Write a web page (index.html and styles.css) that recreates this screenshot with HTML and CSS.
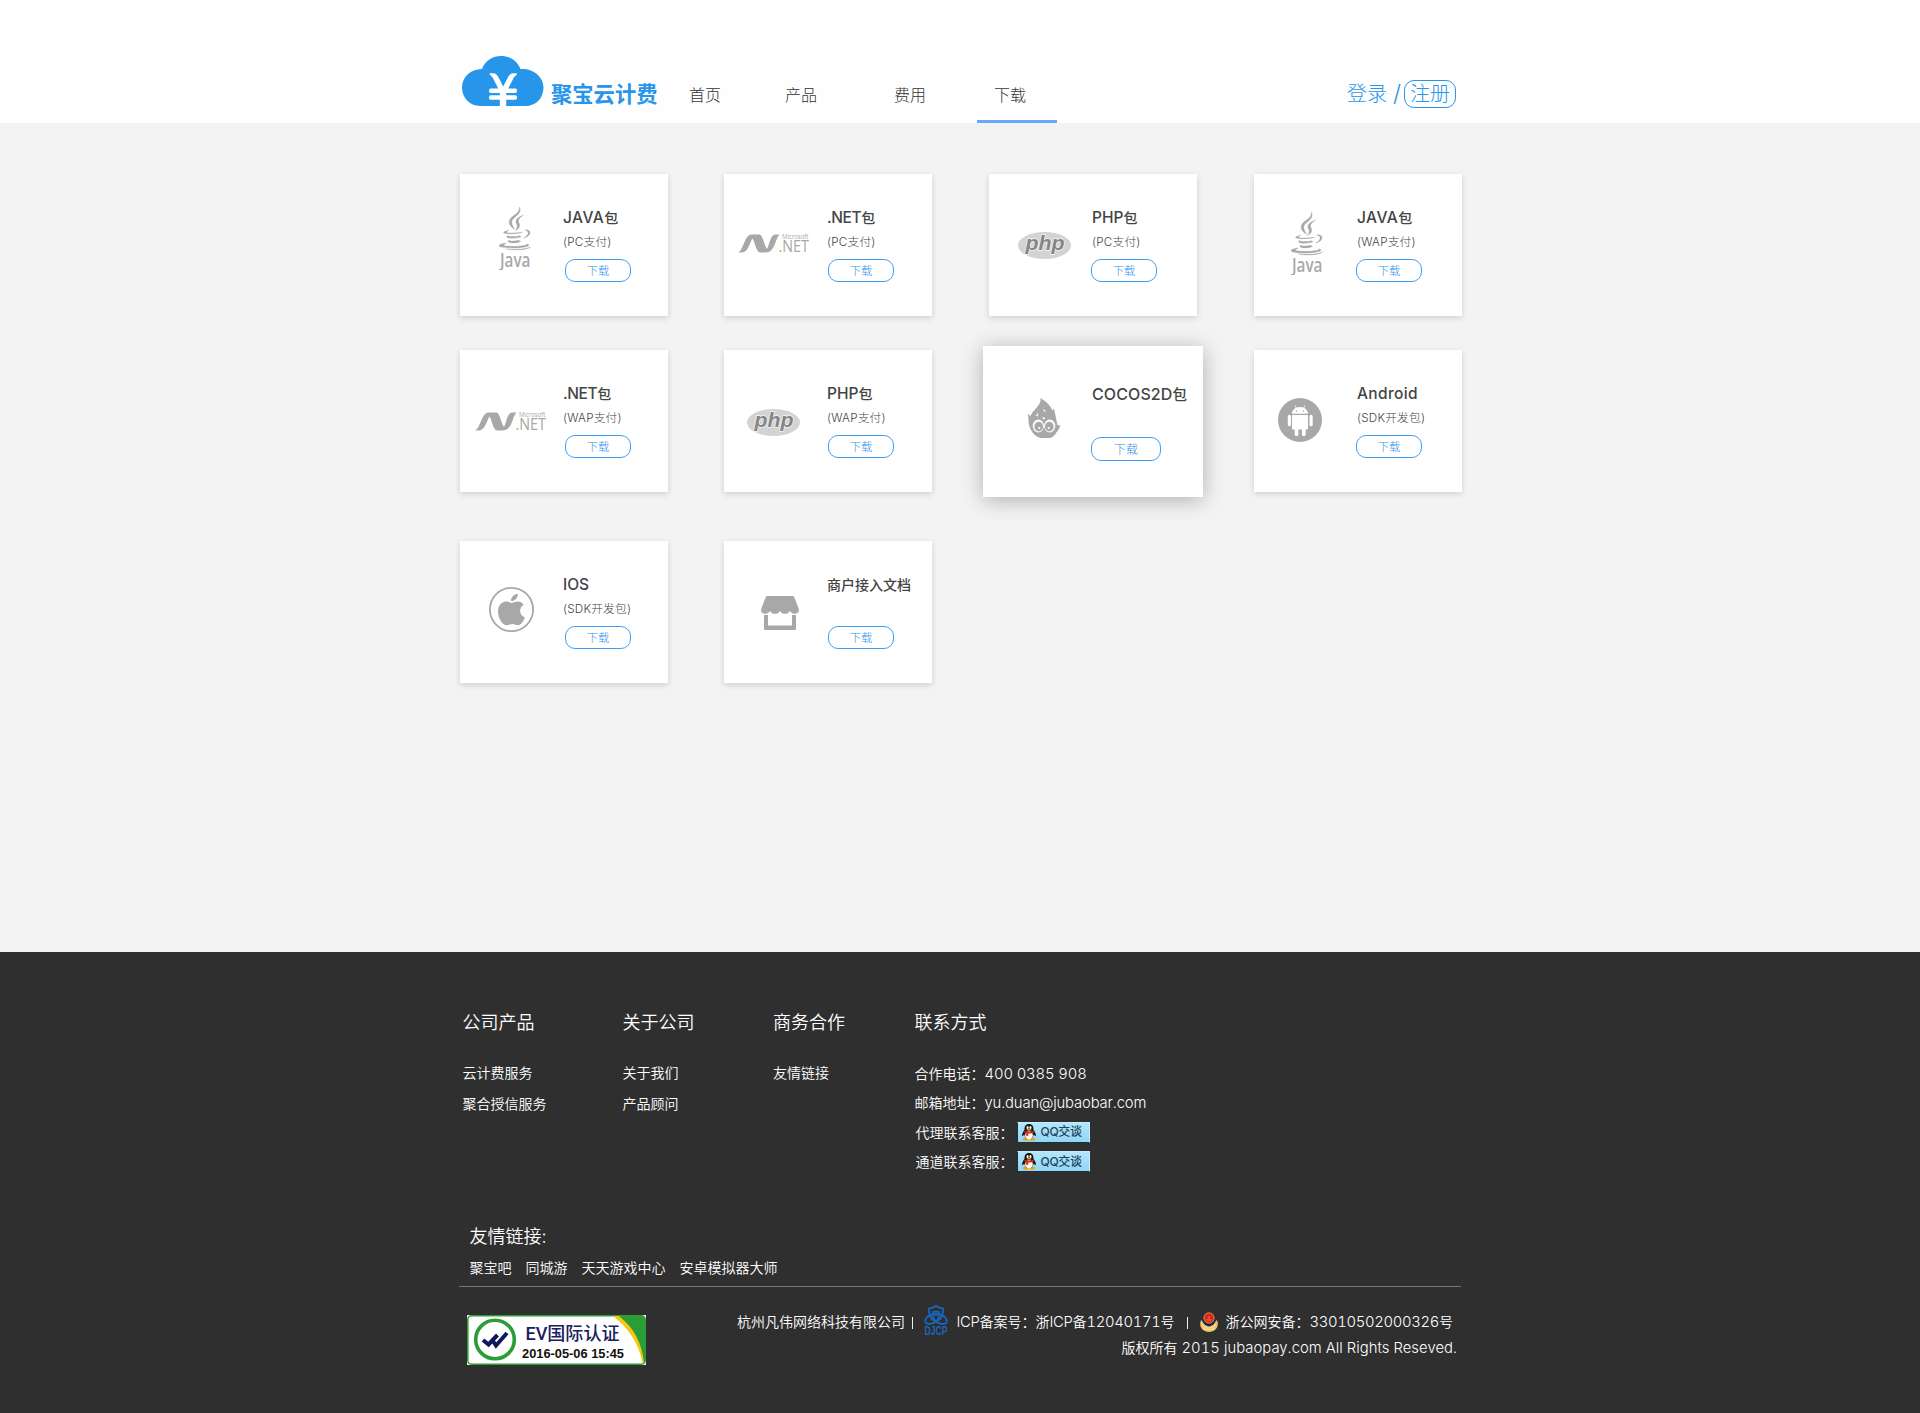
FILE: index.html
```html
<!DOCTYPE html>
<html lang="zh-CN">
<head>
<meta charset="utf-8">
<title>聚宝云计费 - 下载</title>
<link rel="stylesheet" href="styles.css">
</head>
<body>
<svg class="defs" width="0" height="0" aria-hidden="true">
  <symbol id="java" viewBox="0 0 32 63">
    <g fill="#a8a8a8" stroke="#a8a8a8" stroke-width=".35">
      <path d="M20.500 0c2.400 5-2.300 8.300-5.600 11.300-3.200 3-2.500 5.500.8 11.200C10.500 18.800 9 15.800 11 12.200 13.300 8.300 21 6.500 20.500 0z"/>
      <path d="M24.500 8.200c-5.800 2-8.700 4.500-7.200 8 1.300 2.700 1.300 4.200-.8 7.300 4-2.400 5-4.500 3.500-7.600-1.400-2.900-.1-4.600 4.500-7.700z"/>
      <path d="M10 23.400c-3 .3-6.200 1.400-5.300 2.300 1.800 1.600 14.500 1.300 19-.5-4 .5-14.200 1.200-16 .2-.7-.5.500-1.400 2.300-2z"/>
      <path d="M26 22.900c6.300-.8 7.500 5.300-1.100 8.300 4.600-3 6.200-6.900 1.100-8.300z"/>
      <path d="M9 28.500c-5 2.400 4.800 4.100 13.200 1.300l-1.800-1.100c-4.500 1.200-12.200 1.200-11.400-.2zM10 32.900c-4.200 2.600 4.500 4.400 11.600 1.500l-2-1.100c-3.900 1.200-9.800 1.100-9.600-.4z"/>
      <path d="M7.300 36.200C2.500 36-3 38.700 2 40c7.500 1.700 23.500 1 27.200-1.100 1.700-1-.2-2-1.600-2.100.7.900-.3 1.300-2.400 1.700-6.200 1.100-18.300 1.100-20.400.1-.9-.7.900-1.800 2.500-2.400z"/>
      <path d="M31.500 39.700c-2.200 3.200-15.500 4.200-24.300 2.300 8.300.7 20.500.4 24.300-2.300z"/>
    </g>
    <text x="1" y="59.500" textLength="30.500" lengthAdjust="spacingAndGlyphs" class="java-word">Java</text>
  </symbol>
  <symbol id="net" viewBox="0 0 71 19">
    <path fill="#a8a8a8" d="M0 18.500C6 16 6 1 13.500.500H22C25.500 3 26 11 29 15 31.500 11 32 1 37 .500H41.500C37 5 37 18.500 28 18.500H22C18 18 17 8 14.500 4.500 12 8 10.500 17 5 18.500z"/>
    <text x="44" y="5.200" textLength="26.500" lengthAdjust="spacingAndGlyphs" class="ms-word">Microsoft</text>
    <text x="40.500" y="18.300" textLength="30.500" lengthAdjust="spacingAndGlyphs" class="net-word">.NET</text>
  </symbol>
  <symbol id="php" viewBox="0 0 53 27">
    <ellipse cx="26.500" cy="13.500" rx="26.500" ry="13.500" fill="#d3d3d3"/>
    <text x="7.500" y="18.200" textLength="39" lengthAdjust="spacingAndGlyphs" class="php-word">php</text>
  </symbol>
  <symbol id="cocos" viewBox="0 0 32 40">
    <path fill="#a8a8a8" d="M12.500 0c3 2 9.500 6 12 12.500l1.500-2 3.500 16.800L32 27c-.3 3.500-1.600 5.600-3.300 7-2 3.500-4.500 6-7.200 6h-9C7 39 1.600 32 .8 26L0 15.500l2.500 2.800C4 12.500 13.800 7.500 12.500 0z"/>
    <g fill="#fff"><path d="M15 11l3 2-2 .8zM7.500 17.500l3-2-.8 3zM14.500 18.500l3 2-2.500 1zM9 14.500l1 1-1 .5z"/>
    <ellipse cx="10.300" cy="28" rx="5.600" ry="6.400"/><ellipse cx="21.700" cy="28" rx="5.600" ry="6.400"/></g>
    <ellipse cx="10.700" cy="28.600" rx="4.300" ry="4.900" fill="#a8a8a8"/><ellipse cx="21.300" cy="28.600" rx="4.300" ry="4.900" fill="#a8a8a8"/>
    <circle cx="11.200" cy="30" r="1.100" fill="#fff"/><circle cx="20.800" cy="30" r="1.100" fill="#fff"/>
  </symbol>
  <symbol id="android" viewBox="0 0 44 44">
    <circle cx="22" cy="22" r="22" fill="#a8a8a8"/>
    <g fill="#fff">
      <path d="M14 15.800c0-4 3.500-6.800 8-6.800s8 2.800 8 6.800zM14 17h16v13c0 1-.6 1.500-1.500 1.500H27.700v5c0 2-3.700 2-3.700 0v-5h-3.600v5c0 2-3.700 2-3.700 0v-5h-1.200c-.9 0-1.500-.5-1.500-1.500z"/>
      <rect x="9.800" y="16.800" width="3.200" height="11.500" rx="1.600"/><rect x="31.500" y="16.800" width="3.200" height="11.500" rx="1.600"/>
    </g>
    <path stroke="#fff" stroke-width=".8" d="M17 7.500l1.500 3M27 7.500l-1.500 3"/>
    <circle cx="18.500" cy="13" r=".8" fill="#a8a8a8"/><circle cx="25.500" cy="13" r=".8" fill="#a8a8a8"/>
  </symbol>
  <symbol id="apple" viewBox="0 0 45 45">
    <circle cx="22.500" cy="22.500" r="21.600" fill="none" stroke="#a8a8a8" stroke-width="1.800"/>
    <path fill="#a8a8a8" d="M28.700 6.800c.4 3.800-2.700 7.400-6.600 7.200-.4-3.500 2.900-7 6.600-7.200zM22.500 16c1.300 0 3.200-1.500 6.200-1.500 2.500 0 4.700 1.200 6 3.200-5.300 3.200-4.600 10.600 1.200 12.800-1 3-3.700 7.800-6.900 7.800-2.200 0-3-1.300-5.600-1.300s-3.600 1.300-5.700 1.300C13.300 38.300 9 31 9 24.500c0-6.300 4-9.900 8.200-9.900 2.400 0 4 1.400 5.300 1.400z"/>
  </symbol>
  <symbol id="store" viewBox="0 0 38 34">
    <path fill="#a8a8a8" d="M6.500 0h25c1 0 1.500.5 1.900 1.400L38 13.500c0 5.500-6.500 5.500-9.200 1.500-2 3.800-7.500 3.800-9.800 0-2.200 3.800-7.800 3.800-9.800 0C6.500 19 0 19 0 13.500L4.600 1.400C5 .5 5.500 0 6.500 0z"/>
    <path fill="#a8a8a8" d="M3 19h4v10.500h24V19h4v13.500c0 1-.5 1.500-1.500 1.500h-29C3.500 34 3 33.500 3 32.500z"/>
  </symbol>
  <symbol id="penguin" viewBox="0 0 16 18">
    <path fill="#f5a300" d="M3 14.500c-2 1-1.500 3 .5 3H8l5 0c2 0 2-2 0-3z"/>
    <path fill="#151515" d="M8 0C4.500 0 3 2.500 3.300 6 1.500 8.500 0 11.500 1 13l2-1.500 2 4h6l2-4L15 13c1-1.500-.5-4.500-2.300-7C13 2.500 11.500 0 8 0z"/>
    <ellipse cx="8" cy="12" rx="4" ry="4.300" fill="#fff"/>
    <ellipse cx="6.500" cy="3.700" rx="1.100" ry="1.600" fill="#fff"/><ellipse cx="9.500" cy="3.700" rx="1.100" ry="1.600" fill="#fff"/>
    <ellipse cx="8" cy="6.100" rx="2.700" ry=".9" fill="#f5a300"/>
    <path fill="#e22418" d="M3.300 6.800c3 2 6.400 2 9.400 0l.5 2c-2 1.300-4.200 1.500-6 1.300v2.600l-2.200-.2V9.600L3 8.800z"/>
  </symbol>
</svg>

<header class="header">
  <div class="wrap header-row">
    <div class="logo">
      <svg class="logo-cloud" width="82" height="51" viewBox="0 0 82 51">
        <path fill="#2795ea" d="M18 50C7.500 50 0 41.500 0 31.500 0 21.500 8 13 20 13 23.500 4 31 0 39 0s15.500 4 19.500 13C71 12 81.500 20.500 81.500 31.500 81.500 42 74 50 63.500 50z"/>
        <path fill="#fff" d="M27.500 17.200h3.500c3 0 4.500 2 6 5l4.200 8.300 4.300-8.300c1.500-3 3-5 6-5H55c0 2-1.500 2.600-3 4l-5.800 11.300h7.300c2 0 2 4.500 0 4.500h-9.300v2.200h9.300c2 0 2 4.500 0 4.500h-9.300V51h-6.400v-7.300h-9.300c-2 0-2-4.500 0-4.500h9.300V37h-9.300c-2 0-2-4.500 0-4.500h7.700L30.500 21.200c-1-1.500-3-2-3-4z"/>
      </svg>
      <span class="logo-name">聚宝云计费</span>
    </div>
    <nav class="nav">
      <a class="nav-item home">首页</a>
      <a class="nav-item">产品</a>
      <a class="nav-item fee">费用</a>
      <a class="nav-item active">下载</a>
    </nav>
    <div class="account"><a>登录</a><span class="slash">/</span><a class="register">注册</a></div>
  </div>
</header>

<main class="main">
  <div class="wrap grid">
    <section class="card"><div class="pic"><svg class="i-java"><use href="#java"/></svg></div><div class="info"><h3><b class="t-java">JAVA</b>包</h3><p>(PC支付)</p><a class="btn b1">下载</a></div></section>
    <section class="card"><div class="pic"><svg class="i-net"><use href="#net"/></svg></div><div class="info"><h3><b class="t-net">.NET</b>包</h3><p>(PC支付)</p><a class="btn">下载</a></div></section>
    <section class="card"><div class="pic"><svg class="i-php"><use href="#php"/></svg></div><div class="info"><h3><b>PHP</b>包</h3><p>(PC支付)</p><a class="btn b3">下载</a></div></section>
    <section class="card"><div class="pic"><svg class="i-java low"><use href="#java"/></svg></div><div class="info"><h3><b class="t-java">JAVA</b>包</h3><p>(WAP支付)</p><a class="btn b3">下载</a></div></section>
    <section class="card"><div class="pic"><svg class="i-net low"><use href="#net"/></svg></div><div class="info"><h3><b class="t-net">.NET</b>包</h3><p>(WAP支付)</p><a class="btn b1">下载</a></div></section>
    <section class="card"><div class="pic"><svg class="i-php low"><use href="#php"/></svg></div><div class="info"><h3><b>PHP</b>包</h3><p>(WAP支付)</p><a class="btn">下载</a></div></section>
    <section class="card raised"><div class="pic"><svg class="i-cocos"><use href="#cocos"/></svg></div><div class="info"><h3><b>COCOS2D</b>包</h3><p></p><a class="btn b3">下载</a></div></section>
    <section class="card"><div class="pic"><svg class="i-android"><use href="#android"/></svg></div><div class="info"><h3><b class="t-android">Android</b></h3><p>(SDK开发包)</p><a class="btn b3">下载</a></div></section>
    <section class="card"><div class="pic"><svg class="i-apple"><use href="#apple"/></svg></div><div class="info"><h3><b>IOS</b></h3><p>(SDK开发包)</p><a class="btn b1">下载</a></div></section>
    <section class="card"><div class="pic"><svg class="i-store"><use href="#store"/></svg></div><div class="info"><h3>商户接入文档</h3><p></p><a class="btn">下载</a></div></section>
  </div>
</main>

<footer class="footer">
  <div class="wrap">
    <div class="columns">
      <div class="col"><h4>公司产品</h4><a>云计费服务</a><a>聚合授信服务</a></div>
      <div class="col"><h4>关于公司</h4><a>关于我们</a><a>产品顾问</a></div>
      <div class="col"><h4>商务合作</h4><a>友情链接</a></div>
      <div class="col contact"><h4>联系方式</h4>
        <div>合作电话：<span class="lat phone">400 0385 908</span></div>
        <div>邮箱地址：<span class="lat mail">yu.duan@jubaobar.com</span></div>
        <div class="service">代理联系客服：<span class="qq"><svg width="16" height="17"><use href="#penguin"/></svg>QQ交谈</span></div>
        <div class="service">通道联系客服：<span class="qq"><svg width="16" height="17"><use href="#penguin"/></svg>QQ交谈</span></div>
      </div>
    </div>
    <div class="friends">
      <h4>友情链接:</h4>
      <div class="friend-row"><a>聚宝吧</a><a>同城游</a><a>天天游戏中心</a><a>安卓模拟器大师</a></div>
    </div>
    <div class="legal">
      <svg class="ev" width="179" height="50" viewBox="0 0 179 50">
        <rect width="179" height="50" fill="#dff0df"/>
        <rect x=".8" y=".8" width="177.400" height="48.400" rx="4" fill="#fff" stroke="#2a9d37" stroke-width="1.600"/>
        <path fill="#fcc60f" d="M146 1h12l19 30v17h-1.500C172 29 162 13 146 1z"/>
        <path fill="#2a9d37" d="M152 1h22c3 0 4 1 4 4v43h-1C175 28 167 13 152 1z"/>
        <circle cx="28" cy="24.500" r="19.300" fill="#fff" stroke="#2a9d37" stroke-width="3.600"/>
        <path fill="none" stroke="#10195b" stroke-width="4" d="M16 25l5.500 4.500 9-9.500M26 26l3 4.500L40 18"/>
        <text x="58.500" y="25" textLength="94" lengthAdjust="spacingAndGlyphs" class="ev-title">EV国际认证</text>
        <text x="55" y="43" textLength="102" lengthAdjust="spacingAndGlyphs" class="ev-date">2016-05-06 15:45</text>
      </svg>
      <div class="copy">
        <div class="copy-row">
          <span class="item">杭州凡伟网络科技有限公司</span><i class="bar first"></i>
          <svg class="djcp" width="24" height="31" viewBox="0 0 24 31">
            <g fill="none" stroke="#1766bd" stroke-width="1.900"><path d="M5 3.500Q9 3 12 1q3 2 7 2.500C19.500 10 17 14.500 12 17 7 14.500 4.500 10 5 3.500z"/><path d="M8 7.500q4-2 8 0"/><ellipse cx="8" cy="14" rx="7.300" ry="4.300" transform="rotate(-25 8 14)"/><ellipse cx="16" cy="14" rx="7.300" ry="4.300" transform="rotate(25 16 14)"/></g>
            <text x=".5" y="30.300" textLength="23" lengthAdjust="spacingAndGlyphs" class="djcp-word">DJCP</text>
          </svg>
          <span class="item"><span class="lat num">ICP</span>备案号：浙<span class="lat num">ICP</span>备<span class="lat num">12040171</span>号</span><i class="bar second"></i>
          <svg class="police" width="18" height="20" viewBox="0 0 18 20">
            <path fill="#f0c465" d="M1 8c-2.500 6 1 12 8 12s10.500-6 8-12l-3 3H4z"/>
            <path fill="#16225f" d="M3 3l6-2 6 2v6c0 3-3 5-6 5.500C6 14 3 12 3 9z"/>
            <circle cx="9" cy="6" r="5.200" fill="#d9261c" stroke="#e9a93c" stroke-width=".8"/>
            <path fill="#f0843a" d="M6.500 7.500h5v1h-5zM8.400 4.500h1.200v2H8.400z"/>
            <path fill="none" stroke="#fff0b8" stroke-width=".6" d="M2 12c2 3 4 4 7 4s5-1 7-4M3 16c3 2 9 2 12 0"/>
          </svg>
          <span class="item">浙公网安备：<span class="lat num">33010502000326</span>号</span>
        </div>
        <div class="rights">版权所有 <span class="lat">2015 jubaopay.com All Rights Reseved.</span></div>
      </div>
    </div>
  </div>
</footer>
</body>
</html>
```
FILE: styles.css
```css
* { box-sizing: border-box; }
body { margin: 0; background: #f3f3f3; font-family: Inter, "Noto Sans CJK SC", sans-serif; font-size: 14px; font-weight: 300; color: #333; }
h3, h4, p { margin: 0; font-weight: inherit; }
b { font-weight: inherit; }
.defs { display: none; }
.wrap { width: 1002px; margin-left: 460px; }

.header { height: 123px; background: #fefefe; }
.header-row { height: 123px; display: flex; align-items: flex-start; }
.logo { display: flex; padding-left: 2px; width: 197px; flex: none; }
.logo-cloud { margin-top: 56px; flex: none; }
.logo-name { margin: 82px 0 0 7px; font-size: 21.3px; line-height: 24px; font-weight: 700; color: #2795ea; white-space: nowrap; }
.nav { display: flex; padding-left: 14px; height: 123px; }
.nav-item { width: 80px; padding: 84px 0 0 18px; font-size: 16px; line-height: 22px; }
.home { margin-right: 16px; }
.fee { margin: 0 21px 0 29px; }
.active { padding-left: 17px; border-bottom: 3px solid #66aaff; }
.account { display: flex; margin: 80px 6px 0 auto; font-size: 20px; line-height: 28px; color: #2795ea; }
.slash { margin: 0 1px 0 6px; font-size: 23px; width: 10px; }
.register { width: 52px; height: 28px; line-height: 26px; border: 1px solid #2795ea; border-radius: 10px; text-align: center; }

.main { height: 829px; padding-top: 51px; }
.grid { display: grid; grid-template-columns: 264px 265px 265px 208px; grid-template-rows: 176px 191px 142px; }
.card { width: 208px; height: 142px; display: flex; background: #fff; box-shadow: 0 2px 6px rgba(0,0,0,.15); }
.pic { width: 103px; flex: none; }
.pic svg { display: block; }
.info { padding-top: 32.500px; white-space: nowrap; }
.info h3 { height: 22px; line-height: 22px; font-size: 14px; font-weight: 500; color: #444; }
.info h3 b { font-size: 15.5px; }
.info h3 .t-java { letter-spacing: .5px; }
.info h3 .t-net { letter-spacing: -.4px; }
.info h3 .t-android { letter-spacing: .35px; }
.info p { height: 18px; margin: 4.500px 0 8px; line-height: 18px; font-size: 11.7px; letter-spacing: .2px; color: #444; }
.btn { display: block; width: 66px; height: 23px; margin-left: 1px; border: 1px solid #3fa0f3; border-radius: 10px; line-height: 23px; text-align: center; font-size: 11.3px; color: #2f92ec; }
.b1 { margin-left: 2px; }
.b3 { margin-left: -1px; }
.i-java { width: 32px; height: 63px; margin: 33px 0 0 38.500px; }
.i-java.low { margin: 38px 0 0 36.500px; }
.i-net { width: 71px; height: 19px; margin: 60px 0 0 13.500px; }
.i-net.low { margin: 62px 0 0 15px; }
.i-php { width: 53px; height: 27px; margin: 58px 0 0 29px; }
.i-php.low { margin: 59px 0 0 23px; }
.i-cocos { width: 32px; height: 40px; margin: 52px 0 0 45px; }
.i-android { width: 44px; height: 44px; margin: 48px 0 0 23.500px; }
.i-apple { width: 45px; height: 45px; margin: 46px 0 0 29px; }
.i-store { width: 38px; height: 34px; margin: 55px 0 0 37px; }
.raised { width: 220px; height: 151px; margin: -4px 0 0 -6px; box-shadow: 0 3px 20px rgba(0,0,0,.28); }
.raised .pic { width: 109px; }
.raised .info { padding-top: 37px; }
.raised h3 { font-size: 14.5px; }
.raised h3 b { font-size: 16px; letter-spacing: .1px; }
.raised p { margin-bottom: 9px; }
.raised .btn { width: 70px; height: 24px; line-height: 24px; font-size: 12px; }
.java-word { font: 600 20px "Open Sans", sans-serif; fill: #a8a8a8; }
.ms-word { font: 6.500px "Open Sans", sans-serif; fill: #a8a8a8; }
.net-word { font: 17px "Open Sans", sans-serif; fill: #a8a8a8; }
.php-word { font: italic 700 21px "Liberation Sans", sans-serif; fill: #858585; stroke: #f4f4f4; stroke-width: 1.5px; paint-order: stroke; }

.footer { height: 461px; padding-top: 60px; background: #2f2f2f; color: #fff; font-weight: 350; }
.columns { display: flex; height: 207px; padding-left: 2.500px; }
.footer h4 { font-size: 18px; line-height: 22px; }
.col { width: 160px; line-height: 31px; }
.col:nth-child(2) { width: 150.500px; }
.col:nth-child(3) { width: 141.500px; }
.col h4 { margin-bottom: 23px; }
.col a { display: block; }
.contact { width: 400px; line-height: 29.400px; }
.contact h4 { margin-bottom: 25px; }
.contact div { height: 29.400px; }
.service { display: flex; align-items: center; padding-left: 1px; }
.qq { display: flex; align-items: center; width: 73px; height: 21px; margin-left: 3px; padding-left: 3px; gap: 4px; background: linear-gradient(#b4e6fb, #93d5f5); border: 1px solid #c4ecff; border-left-color: #17323f; border-bottom-color: #17323f; font-size: 12px; line-height: 18px; font-weight: 500; color: #1c465c; white-space: nowrap; letter-spacing: -.3px; }
.qq svg { flex: none; }
.friends { height: 67px; padding: 7px 0 0 9.500px; }
.friend-row { display: flex; gap: 14px; margin-top: 8.500px; line-height: 22px; }
.legal { display: flex; width: 1002px; margin-left: -1px; border-top: 1px solid #777; padding: 28px 4px 0 8px; }
.ev { flex: none; }
.ev-title { font: 500 18px Roboto, "Noto Sans CJK SC", sans-serif; fill: #1b2060; }
.ev-date { font: 700 13.500px "Liberation Sans", sans-serif; fill: #111; }
.copy { flex: 1; padding-left: 91px; white-space: nowrap; }
.copy-row { display: flex; align-items: center; height: 31px; margin-top: -10px; line-height: 22px; }
.item { margin-top: 3px; }
.bar { width: 1px; height: 12px; background: #eee; }
.bar.first { margin: 4px 11px 0 7px; }
.bar.second { margin: 4px 12px 0; }
.djcp { margin-right: 8.500px; overflow: visible; }
.djcp-word { font: 700 12.500px "Liberation Sans", sans-serif; fill: #1766bd; }
.police { margin: 3px 8px 0 0; }
.lat { font-size: 14.800px; font-variant-numeric: tabular-nums; letter-spacing: .05px; font-weight: 300; }
.phone, .mail { letter-spacing: -.13px; }
.num { letter-spacing: -.32px; }
.rights { line-height: 22px; margin-top: 1px; text-align: right; }
```
